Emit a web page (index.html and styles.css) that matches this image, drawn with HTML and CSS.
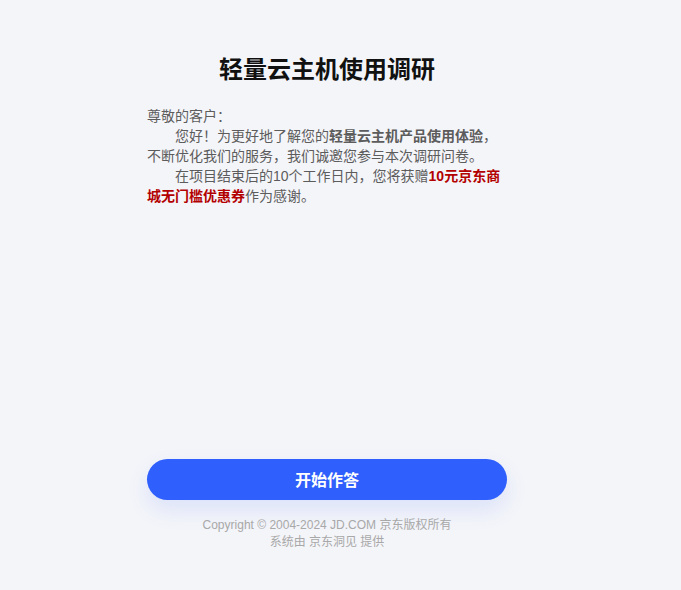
FILE: index.html
```html
<!DOCTYPE html>
<html lang="zh-CN">
<head>
  <meta charset="UTF-8" />
  <meta name="viewport" content="width=device-width, initial-scale=1.0"/>
  <title>轻量云主机使用调研</title>
  <link rel="stylesheet" href="styles.css">
</head>
<body>

  <div class="survey">
    <h1>轻量云主机使用调研</h1>

    <div class="intro">
      <p>尊敬的客户：</p>
      <p class="indent">您好！为更好地了解您的<b>轻量云主机产品使用体验</b>，不断优化我们的服务，我们诚邀您参与本次调研问卷。</p>
      <p class="indent">在项目结束后的10个工作日内，您将获赠<b class="gift">10元京东商城无门槛优惠券</b>作为感谢。</p>
    </div>

    <button class="start">开始作答</button>

    <!-- Footer -->
    <footer>
      Copyright © 2004-2024 JD.COM 京东版权所有<br>
      系统由 京东洞见 提供
    </footer>
  </div>

</body>
</html>
```

FILE: styles.css
```css
body {
  margin: 0;
  background: #f4f5f9;
  font-family: "Liberation Sans", "Noto Sans CJK SC", sans-serif;
  color: #5c5c5c;
}

.survey {
  width: 360px;
  margin-left: 147px;
  padding-top: 53px;
}

h1 {
  font-size: 24px;
  line-height: 34px;
  font-weight: bold;
  color: #111;
  text-align: center;
  margin: 0 0 19px;
}

/* === INTRO TEXT === */
.intro {
  font-size: 14px;
  line-height: 20px;
  height: 100px;
}

.intro p {
  margin: 0;
}

.intro .indent {
  text-indent: 2em;
}

.intro b {
  font-weight: bold;
}

.intro .gift {
  color: #b30000;
}

/* === START BUTTON === */
.start {
  display: block;
  width: 100%;
  height: 41px;
  margin-top: 253px;
  padding-bottom: 3px;
  border: none;
  border-radius: 21px;
  background: #2f5ffc;
  color: #fff;
  font-family: inherit;
  font-size: 16px;
  font-weight: bold;
  box-shadow: 0 10px 22px rgba(47, 95, 252, 0.12);
  cursor: pointer;
}

/* === FOOTER === */
footer {
  margin-top: 17px;
  font-size: 12px;
  line-height: 17px;
  color: #a8a8a8;
  text-align: center;
}
```
